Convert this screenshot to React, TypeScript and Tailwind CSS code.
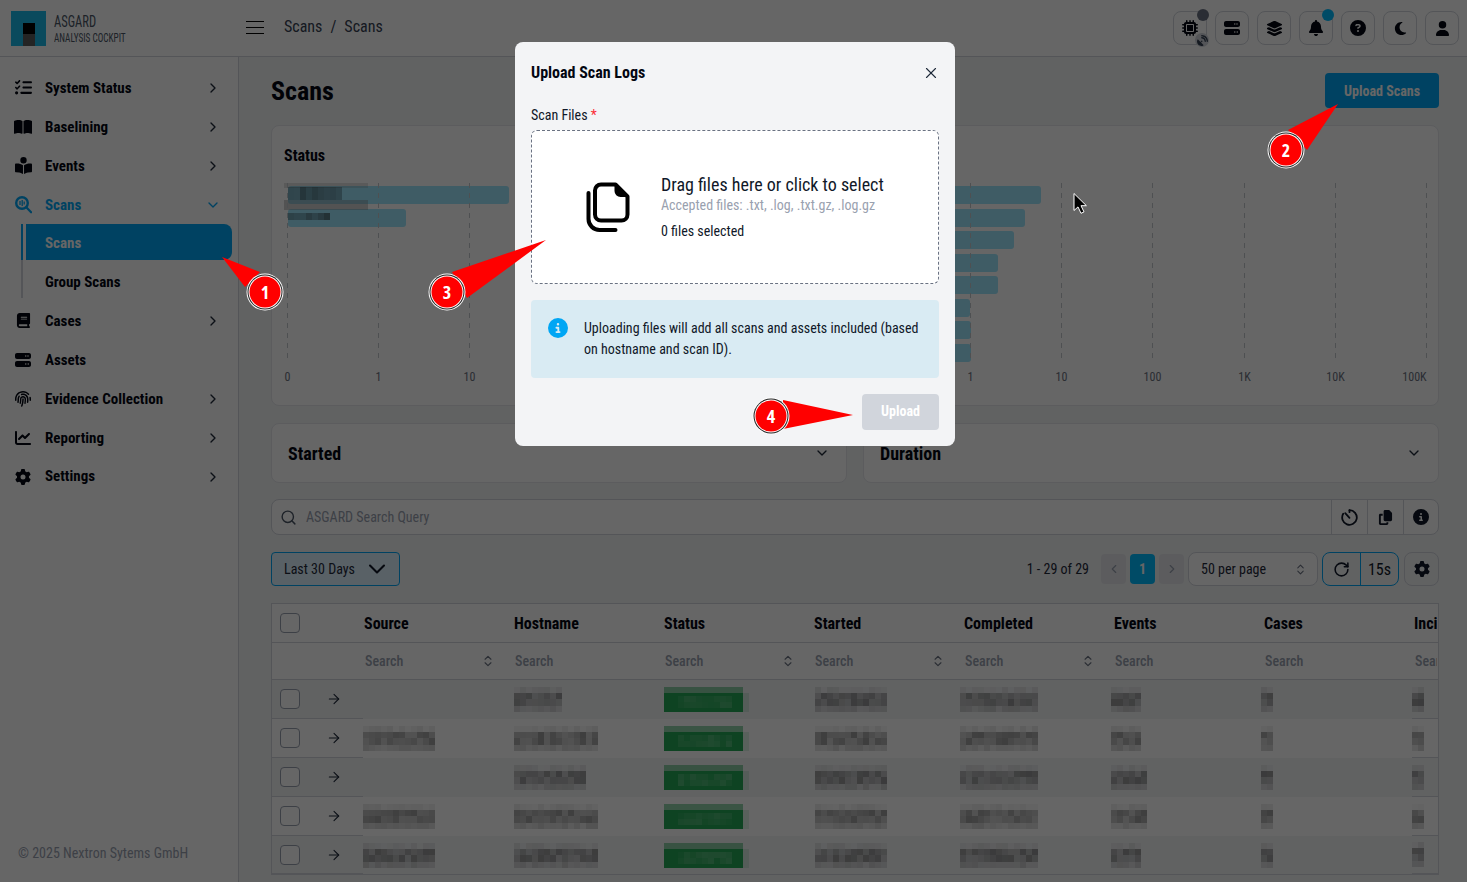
import { ChevronDown, ChevronRight, ChevronLeft, ChevronsUpDown, ArrowRight, Search, X, RotateCw } from 'lucide-react'
import {
  FaBell, FaBook, FaBookOpen, FaBookOpenReader, FaChartLine, FaCircleInfo, FaCircleQuestion, FaCopy, FaFingerprint, FaGear,
  FaLayerGroup, FaListCheck, FaMicrochip, FaMoon, FaSatelliteDish, FaServer, FaUser,
} from 'react-icons/fa6'
import type { ReactNode } from 'react'

const navItems: { label: string; icon: ReactNode; arrow?: boolean }[] = [
  { label: 'System Status', icon: <FaListCheck size={17} />, arrow: true },
  { label: 'Baselining', icon: <FaBookOpen size={18} />, arrow: true },
  { label: 'Events', icon: <FaBookOpenReader size={17} />, arrow: true },
]

const navItemsBelow: { label: string; icon: ReactNode; arrow?: boolean }[] = [
  { label: 'Cases', icon: <FaBook size={15} />, arrow: true },
  { label: 'Assets', icon: <FaServer size={16} /> },
  { label: 'Evidence Collection', icon: <FaFingerprint size={16} />, arrow: true },
  { label: 'Reporting', icon: <FaChartLine size={16} />, arrow: true },
  { label: 'Settings', icon: <FaGear size={16} />, arrow: true },
]

const columns = ['Source', 'Hostname', 'Status', 'Started', 'Completed', 'Events', 'Cases', 'Inci']
const sortable = ['Source', 'Status', 'Started', 'Completed']

const rows = [
  { source: 0, host: 8, started: 12, completed: 13, events: 5, seed: 3 },
  { source: 12, host: 14, started: 12, completed: 13, events: 5, seed: 11 },
  { source: 0, host: 12, started: 12, completed: 13, events: 6, seed: 29 },
  { source: 12, host: 14, started: 12, completed: 13, events: 6, seed: 47 },
  { source: 12, host: 14, started: 12, completed: 13, events: 5, seed: 71 },
]

const makeRandom = (seed: number) => {
  let s = seed * 7919 + 17
  return () => {
    s = (s * 1103515245 + 12345) % 2147483648
    return s / 2147483648
  }
}

// pixelated stand-in for the redacted cell values
const Mosaic = ({ cols, seed }: { cols: number; seed: number }) => {
  const next = makeRandom(seed + cols)
  const cells = []
  for (let y = 0; y < 4; y++) {
    for (let x = 0; x < cols; x++) {
      const a = y === 0 ? 0.02 + next() * 0.08 : y === 3 ? 0.1 + next() * 0.1 : 0.2 + next() * 0.22
      cells.push(<rect key={`${x}-${y}`} x={x * 6} y={y * 6.2} width={6} height={6.2} fill="#111" fillOpacity={a} />)
    }
  }
  return (
    <svg width={cols * 6} height={25} shapeRendering="crispEdges" className="block">
      {cells}
    </svg>
  )
}

const StatusMosaic = ({ seed }: { seed: number }) => {
  const next = makeRandom(seed)
  const cells = []
  for (let x = 2; x < 11; x++) {
    for (let y = 1; y < 3; y++) {
      cells.push(<rect key={`${x}-${y}`} x={x * 6 + 2} y={y * 6 + 3} width={6} height={6} fill="#fff" fillOpacity={0.04 + next() * 0.16} />)
    }
  }
  return (
    <svg width={86} height={25} shapeRendering="crispEdges" className="block">
      <rect x={0} y={0} width={79} height={6} fill="#25a855" fillOpacity={0.5} />
      <rect x={0} y={6} width={79} height={19} fill="#25a855" />
      <rect x={79} y={6} width={6} height={19} fill="#25a855" fillOpacity={0.15} />
      {cells}
    </svg>
  )
}

const Checkbox = () => <div className="w-[20px] h-[20px] rounded border border-gray-400 bg-white" />

const TopButton = ({ children }: { children: ReactNode }) => (
  <button className="relative w-[34px] h-[34px] rounded-lg border border-gray-300 flex items-center justify-center text-gray-950">
    {children}
  </button>
)

const NavRow = ({ label, icon, arrow }: { label: string; icon: ReactNode; arrow?: boolean }) => (
  <div className="group h-[39px] flex items-center pl-[15px] pr-[17px] text-gray-950">
    <span className="w-[16px] flex justify-center [&>svg]:shrink-0">{icon}</span>
    <span className="ml-[14px] pt-[2px] group-last:pt-0 flex-1 text-[15px] font-bold">{label}</span>
    {arrow && <ChevronRight size={16} className="text-gray-800" />}
  </div>
)

const ScansIcon = () => (
  <svg width="17" height="18" viewBox="0 0 17 18" fill="none" stroke="currentColor" className="shrink-0">
    <circle cx="7" cy="7" r="5.8" strokeWidth="2.4" />
    <path d="M5 5v4M7.2 4v6M9.2 5.5v3" strokeWidth="1.3" />
    <path d="M11.3 11.3l4.8 5" strokeWidth="2.2" strokeLinecap="round" />
  </svg>
)

const FilesIcon = () => (
  <svg width="44" height="50" viewBox="0 0 44 50" fill="none" stroke="#000" strokeWidth="4" strokeLinejoin="round" strokeLinecap="round" className="shrink-0">
    <path d="M15 2.5h14.5l12 12v18a6 6 0 0 1-6 6H15a6 6 0 0 1-6-6v-24a6 6 0 0 1 6-6z" />
    <path d="M29.5 3v6a5 5 0 0 0 5 5h7" fill="#000" strokeWidth="2" />
    <path d="M2.5 11v26a11 11 0 0 0 11 11h16" />
  </svg>
)

const HistoryIcon = () => (
  <svg width="17" height="17" viewBox="0 0 17 17" fill="none" stroke="currentColor" strokeWidth="1.8" strokeLinecap="round">
    <path d="M8.5 1.2a7.3 7.3 0 1 1-6.3 3.6" />
    <path d="M4.2 4.2l4.3 4.6" />
    <path d="M8.5 1.2v2" />
  </svg>
)

const BurgerIcon = () => (
  <svg width="18" height="14" viewBox="0 0 18 14" stroke="#000" strokeWidth="1" className="shrink-0">
    <path d="M0 .5h18M0 6.5h18M0 12.5h18" />
  </svg>
)

const Chart = ({ ticks, bars, x0, children }: { ticks: string[]; bars: [number, number][]; x0: number; children?: ReactNode }) => (
  <svg width="560" height="222" className="block overflow-visible">
    {bars.map(([y, w], i) => (
      <rect key={i} x={4} y={y} width={w} height={18} rx={3} fill="#9de5fc" />
    ))}
    {children}
    {ticks.map((t, i) => {
      const x = Math.round(x0 + i * 91.2) + 0.5
      return (
        <g key={t}>
          <line x1={x} x2={x} y1={0} y2={176} stroke="#c4c8ce" strokeDasharray="5 5" />
          <text x={t === '100K' ? x - 12 : x} y={198} textAnchor="middle" fontSize="12" fill="#6b7280">{t}</text>
        </g>
      )
    })}
  </svg>
)

const StatusBlur = () => {
  const next = makeRandom(5)
  const cells = []
  for (let x = 0; x < 9; x++) {
    cells.push(<rect key={`a${x}`} x={4 + x * 6} y={4} width={6} height={13} fill="#111" fillOpacity={0.2 + next() * 0.3} />)
  }
  for (let x = 0; x < 7; x++) {
    cells.push(<rect key={`b${x}`} x={4 + x * 6} y={30} width={6} height={7} fill="#111" fillOpacity={0.2 + next() * 0.35} />)
  }
  return (
    <g shapeRendering="crispEdges">
      <rect x={0} y={0} width={84} height={5} fill="#888" fillOpacity={0.25} />
      <rect x={0} y={17} width={84} height={10} fill="#888" fillOpacity={0.4} />
      {cells}
    </g>
  )
}

const Callout = ({ n, cx, cy, tip, base }: { n: number; cx: number; cy: number; tip: [number, number]; base: [number, number, number, number] }) => (
  <g>
    <polygon points={`${tip[0]},${tip[1]} ${base[0]},${base[1]} ${base[2]},${base[3]}`} fill="#ff0000" />
    <circle cx={cx} cy={cy} r={18.5} fill="#fff" />
    <circle cx={cx} cy={cy} r={17.5} fill="#222" />
    <circle cx={cx} cy={cy} r={16.5} fill="#fff" />
    <circle cx={cx} cy={cy} r={15.5} fill="#ff0000" />
    <text x={cx} y={cy + 7} textAnchor="middle" fontSize="18" fontWeight="700" fontFamily="'Open Sans', sans-serif" fill="#fff">{n}</text>
  </g>
)

export default function App() {
  return (
    <div className="relative w-full h-screen overflow-hidden bg-gray-100 font-['Roboto',sans-serif] [font-stretch:75%] text-gray-900">
      {/* Top bar */}
      <header className="h-[57px] bg-white border-b border-gray-300 flex items-center pl-[11px] pr-[8px]">
        <div className="w-[35px] h-[35px] bg-[#1ab8e8] flex justify-center items-end">
          <div className="w-[12px] h-[23px] flex flex-col">
            <div className="h-[11px] bg-black" />
            <div className="flex-1 bg-[#5a5a5a]" />
          </div>
        </div>
        <div className="ml-[8px] w-[192px] leading-none text-gray-600 whitespace-nowrap">
          <div className="text-[17px] origin-left scale-x-[0.735]">ASGARD</div>
          <div className="text-[13px] mt-[1px] origin-left scale-x-[0.71]">ANALYSIS COCKPIT</div>
        </div>
        <BurgerIcon />
        <div className="ml-[20px] -mt-[2px] flex gap-[8px] text-[16px] text-gray-700">
          <span>Scans</span>
          <span>/</span>
          <span>Scans</span>
        </div>
        <div className="ml-auto flex gap-[8px]">
          <TopButton>
            <FaMicrochip size={16} className="-ml-[1px]" />
            <span className="absolute -top-[3px] -right-[3px] w-[12px] h-[12px] rounded-full bg-gray-500" />
            <span className="absolute -bottom-[3px] -right-[3px] w-[14px] h-[14px] rounded-full bg-gray-300 flex items-center justify-center text-gray-700">
              <FaSatelliteDish size={11} />
            </span>
          </TopButton>
          <TopButton><FaServer size={16} /></TopButton>
          <TopButton><FaLayerGroup size={17} /></TopButton>
          <TopButton>
            <FaBell size={16} />
            <span className="absolute -top-[3px] -right-[2px] w-[12px] h-[12px] rounded-full bg-sky-400" />
          </TopButton>
          <TopButton><FaCircleQuestion size={16} /></TopButton>
          <TopButton><FaMoon size={15} /></TopButton>
          <TopButton><FaUser size={15} /></TopButton>
        </div>
      </header>

      <div className="flex h-[825px]">
        {/* Sidebar */}
        <aside className="w-[239px] shrink-0 bg-white border-r border-gray-300 pt-[11px] flex flex-col">
          {navItems.map((item) => <NavRow key={item.label} {...item} />)}
          <div className="h-[39px] flex items-center pl-[15px] pr-[17px] text-sky-500">
            <span className="w-[16px] flex justify-center"><ScansIcon /></span>
            <span className="ml-[14px] pt-[2px] flex-1 text-[15px] font-bold">Scans</span>
            <ChevronDown size={16} />
          </div>
          <div className="ml-[21px] mr-[6px] border-l-2 border-gray-300 h-[74px]">
            <div className="-ml-[2px] border-l-2 border-sky-500 pl-[3px]">
              <div className="h-[36px] pt-[2px] bg-sky-500 rounded-r-lg flex items-center pl-[19px] text-white text-[15px] font-bold">Scans</div>
            </div>
            <div className="h-[36px] mt-[4px] flex items-center pl-[22px] text-gray-950 text-[15px] font-bold">Group Scans</div>
          </div>
          <div className="mt-[3px]">
            {navItemsBelow.map((item) => <NavRow key={item.label} {...item} />)}
          </div>
          <div className="mt-auto mb-[18px] pl-[18px] text-[14px] text-gray-400">© 2025 Nextron Sytems GmbH</div>
        </aside>

        {/* Main */}
        <main className="flex-1 min-w-0 pl-[32px] pr-[28px] pt-[16px]">
          <div className="h-[35px] flex items-center justify-between">
            <h1 className="mt-[2px] text-[26px] font-bold text-gray-950">Scans</h1>
            <button className="w-[114px] h-[35px] pt-[2px] rounded bg-sky-500 text-white text-[14px] font-bold">Upload Scans</button>
          </div>

          <div className="mt-[17px] grid grid-cols-2 gap-[16px]">
            <section className="h-[281px] rounded-lg border border-gray-200 bg-white pl-[12px] pt-[21px]">
              <h2 className="text-[16px] font-bold leading-[18px] text-gray-950">Status</h2>
              <div className="mt-[18px]">
                <Chart ticks={['0', '1', '10', '100', '1K', '10K']} bars={[[3, 221], [26, 118]]} x0={3}>
                  <StatusBlur />
                </Chart>
              </div>
            </section>
            <section className="h-[281px] rounded-lg border border-gray-200 bg-white pl-[12px] pt-[21px]">
              <h2 className="text-[16px] font-bold leading-[18px] text-gray-950">Type</h2>
              <div className="mt-[18px] -ml-[8px]">
                <Chart
                  ticks={['1', '10', '100', '1K', '10K', '100K']}
                  bars={[[3, 169], [26, 153], [48, 142], [71, 126], [93, 126], [116, 98], [138, 99], [161, 99]]}
                  x0={102}
                />
              </div>
            </section>
          </div>

          <div className="mt-[17px] grid grid-cols-2 gap-[16px]">
            {['Started', 'Duration'].map((title) => (
              <div key={title} className="h-[60px] rounded-lg border border-gray-200 bg-white flex items-center justify-between pl-[16px] pr-[16px]">
                <span className="text-[18px] font-bold text-gray-950">{title}</span>
                <ChevronDown size={16} className="text-gray-800" />
              </div>
            ))}
          </div>

          <div className="mt-[16px] h-[36px] rounded-lg border border-gray-300 bg-white flex items-center">
            <Search size={17} className="ml-[8px] text-gray-600" />
            <span className="ml-[9px] flex-1 text-[14px] text-gray-400">ASGARD Search Query</span>
            <span className="w-[36px] h-full border-l border-gray-300 flex items-center justify-center"><HistoryIcon /></span>
            <span className="w-[36px] h-full border-l border-gray-300 flex items-center justify-center"><FaCopy size={15} /></span>
            <span className="w-[35px] h-full border-l border-gray-300 flex items-center justify-center"><FaCircleInfo size={16} /></span>
          </div>

          <div className="mt-[17px] h-[34px] flex items-center">
            <button className="w-[129px] h-[34px] rounded border border-sky-500 bg-sky-100 flex items-center justify-between pl-[12px] pr-[8px] text-[14px] text-gray-800">
              Last 30 Days
              <ChevronDown size={28} strokeWidth={1.8} className="text-gray-900" />
            </button>
            <span className="ml-auto text-[14px] text-gray-800">1 - 29 of 29</span>
            <span className="ml-[12px] w-[25px] h-[30px] rounded bg-gray-200 flex items-center justify-center text-gray-400"><ChevronLeft size={14} /></span>
            <span className="ml-[4px] w-[25px] h-[30px] rounded bg-sky-400 flex items-center justify-center text-white text-[14px] font-bold">1</span>
            <span className="ml-[4px] w-[25px] h-[30px] rounded bg-gray-200 flex items-center justify-center text-gray-400"><ChevronRight size={14} /></span>
            <span className="ml-[4px] w-[130px] h-[34px] rounded-lg border border-gray-300 bg-white flex items-center justify-between pl-[12px] pr-[10px] text-[14px] text-gray-800">
              50 per page
              <ChevronsUpDown size={13} className="text-gray-500" />
            </span>
            <span className="ml-[4px] w-[77px] h-[34px] rounded-lg border border-sky-500 flex items-center text-gray-900">
              <span className="w-[38px] h-full border-r border-sky-500 flex items-center justify-center"><RotateCw size={17} strokeWidth={2.2} /></span>
              <span className="flex-1 mt-[1px] text-center text-[16px]">15s</span>
            </span>
            <span className="ml-[5px] w-[35px] h-[34px] rounded-lg border border-gray-300 flex items-center justify-center"><FaGear size={16} /></span>
          </div>

          {/* Table */}
          <div className="mt-[17px] border-x border-t border-gray-300 bg-white overflow-hidden">
            <div className="h-[39px] flex items-center border-b border-gray-300">
              <div className="w-[91px] pl-[8px]"><Checkbox /></div>
              {columns.map((c) => (
                <div key={c} className={`${c === 'Inci' ? 'w-[24px] overflow-hidden' : 'w-[150px]'} shrink-0 pl-[1px] mt-[1px] text-[16px] font-bold text-gray-950 whitespace-nowrap`}>{c}</div>
              ))}
            </div>
            <div className="h-[37px] flex items-center border-b border-gray-300">
              <div className="w-[91px]" />
              {columns.map((c) => (
                <div key={c} className={`${c === 'Inci' ? 'w-[24px] overflow-hidden' : 'w-[150px]'} shrink-0 pl-[2px] pr-[18px] flex items-center justify-between text-[14px] font-medium text-gray-400 whitespace-nowrap`}>
                  {c === 'Inci' ? 'Search' : <span>Search</span>}
                  {sortable.includes(c) && <ChevronsUpDown size={14} className="text-gray-500" />}
                </div>
              ))}
            </div>
            {rows.map((r, i) => (
              <div key={r.seed} className={`h-[39px] flex items-center last:border-b border-gray-300 ${i % 2 === 0 ? 'bg-gray-100' : 'bg-white'}`}>
                <div className="w-[91px] h-full shrink-0 border-b border-gray-300 flex items-center pl-[8px]">
                  <Checkbox />
                  <ArrowRight size={16} strokeWidth={1.6} className="ml-[26px] text-gray-800" />
                </div>
                <div className="w-[151px] shrink-0">{r.source > 0 && <Mosaic cols={r.source} seed={r.seed} />}</div>
                <div className="w-[150px] shrink-0"><Mosaic cols={r.host} seed={r.seed + 1} /></div>
                <div className="w-[151px] shrink-0"><StatusMosaic seed={r.seed + 2} /></div>
                <div className="w-[145px] shrink-0"><Mosaic cols={r.started} seed={r.seed + 3} /></div>
                <div className="w-[151px] shrink-0"><Mosaic cols={r.completed} seed={r.seed + 4} /></div>
                <div className="w-[150px] shrink-0"><Mosaic cols={r.events} seed={r.seed + 5} /></div>
                <div className="w-[151px] shrink-0"><Mosaic cols={2} seed={r.seed + 6} /></div>
                <div className="flex-1 h-full border-b border-gray-300 flex items-center"><Mosaic cols={2} seed={r.seed + 7} /></div>
              </div>
            ))}
          </div>
        </main>
      </div>

      {/* Backdrop and dialog */}
      <div className="absolute inset-0 bg-black/60 flex justify-center items-start pt-[42px]">
        <div className="ml-[3px] w-[440px] h-[404px] rounded-lg bg-gray-100 px-[16px]">
          <div className="h-[60px] pt-[1px] flex items-center justify-between">
            <h3 className="text-[16px] font-bold text-gray-950">Upload Scan Logs</h3>
            <X size={18} strokeWidth={1.5} className="-mr-[1px] text-gray-800" />
          </div>
          <label className="block mt-[3px] h-[25px] text-[14px] leading-[20px] text-gray-900">
            Scan Files <span className="text-red-500">*</span>
          </label>
          <div className="h-[154px] rounded-md border border-dashed border-gray-500 bg-white flex items-center pl-[54px]">
            <FilesIcon />
            <div className="ml-[31px]">
              <div className="text-[18px] leading-[22px] text-gray-900">Drag files here or click to select</div>
              <div className="mt-[1px] text-[14px] leading-[16px] text-gray-400">Accepted files: .txt, .log, .txt.gz, .log.gz</div>
              <div className="mt-[8px] text-[14px] leading-[20px] text-gray-900">0 files selected</div>
            </div>
          </div>
          <div className="mt-[16px] h-[78px] rounded bg-[#d9ebf3] flex pl-[17px] pr-[16px] pt-[18px]">
            <FaCircleInfo size={20} className="shrink-0 text-sky-500" />
            <p className="ml-[16px] text-[14px] leading-[21px] text-gray-900">
              Uploading files will add all scans and assets included (based on hostname and scan ID).
            </p>
          </div>
          <div className="mt-[16px] flex justify-end">
            <button className="w-[77px] h-[36px] pb-[2px] rounded bg-gray-300 text-white text-[14px] font-bold">Upload</button>
          </div>
        </div>
      </div>

      {/* Numbered callouts and pointer */}
      <svg width="1467" height="882" className="absolute inset-0 pointer-events-none">
        <Callout n={1} cx={265} cy={292} tip={[222, 257]} base={[260, 272, 245, 287]} />
        <Callout n={2} cx={1286} cy={150} tip={[1338, 104]} base={[1288, 130, 1307, 150]} />
        <Callout n={3} cx={447} cy={292} tip={[546, 240]} base={[452, 272, 467, 298]} />
        <Callout n={4} cx={771} cy={416} tip={[853, 415]} base={[783, 400, 783, 429]} />
        <path d="M1074 193.5v17l4-3.6 3 6.4 3-1.4-3-6.2h5.4z" fill="#000" stroke="#fff" strokeWidth="1" />
      </svg>
    </div>
  )
}
